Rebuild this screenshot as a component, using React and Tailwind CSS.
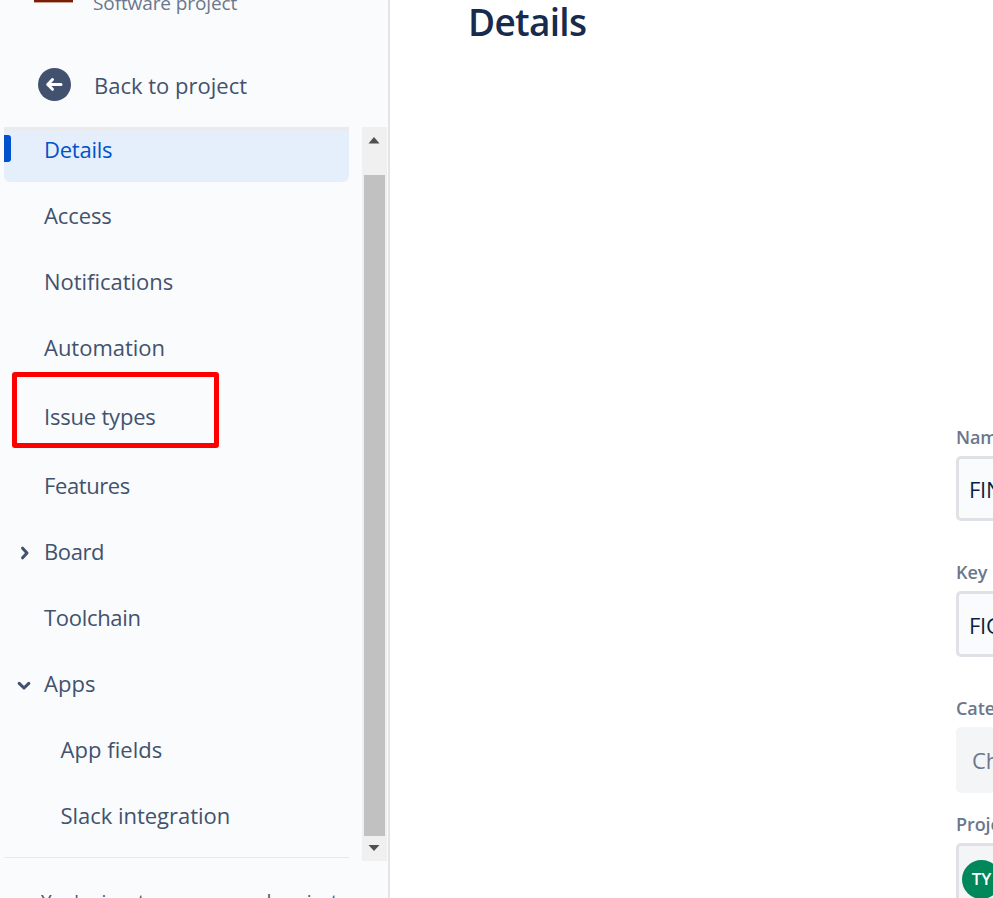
import clsx from "clsx";

const navItems = [
  { label: "Access", tracking: "tracking-[-0.1px]" },
  { label: "Notifications", tracking: "tracking-[-0.02px]" },
  { label: "Automation", tracking: "tracking-[-0.02px]" },
  { label: "Issue types", tracking: "tracking-[-0.2px]", marked: true },
  { label: "Features", tracking: "tracking-[-0.4px]" },
  { label: "Board", tracking: "tracking-[-0.4px]", chevron: "right" },
  { label: "Toolchain", tracking: "tracking-[-0.3px]" },
  { label: "Apps", tracking: "tracking-[0.05px]", chevron: "down" },
  { label: "App fields", tracking: "tracking-[0.05px]", nested: true },
  { label: "Slack integration", tracking: "tracking-[-0.03px]", nested: true },
];

function Chevron({ direction }) {
  return (
    <svg width="16" height="16" viewBox="0 0 16 16" className="ml-3 shrink-0">
      <path
        d={direction === "right" ? "M10.6 4.2 L15 9 L10.6 13.8" : "M7.2 7.4 L12 12 L16.8 7.4"}
        transform="translate(-4 0)"
        fill="none"
        stroke="#42526e"
        strokeWidth="3.1"
        strokeLinecap="round"
        strokeLinejoin="round"
      />
    </svg>
  );
}

function NavItem({ item }) {
  return (
    <div
      className={clsx(
        "relative flex shrink-0 items-center text-[22px] text-[#42526e]",
        item.marked ? "h-[72px]" : "h-[66px]"
      )}
    >
      {item.chevron ? <Chevron direction={item.chevron} /> : <span className="w-7 shrink-0" />}
      <span className={clsx("pb-0.5 whitespace-nowrap", item.nested ? "ml-[28.5px]" : "ml-3", item.tracking)}>
        {item.label}
      </span>
      {item.marked && (
        <div className="absolute top-[-9px] left-2 h-[76px] w-[207px] rounded-[3px] border-5 border-[#ff0000]" />
      )}
    </div>
  );
}

function Scrollbar() {
  return (
    <div className="ml-[13px] flex h-[734px] w-[25px] flex-col items-start bg-[#f0f0f0] pl-0.5">
      <div className="flex h-12 items-start pt-[9px] pl-1">
        <svg width="12" height="8" viewBox="0 0 12 8">
          <path d="M0.5 7.5 L6 1 L11.5 7.5Z" fill="#505050" />
        </svg>
      </div>
      <div className="h-[661px] w-[21px] bg-[#c1c1c1]" />
      <div className="flex grow items-start pt-2 pl-1">
        <svg width="12" height="8" viewBox="0 0 12 8">
          <path d="M0.5 1 L6 7 L11.5 1Z" fill="#505050" />
        </svg>
      </div>
    </div>
  );
}

function Sidebar() {
  return (
    <aside className="flex h-full w-[390px] shrink-0 flex-col overflow-hidden border-r-2 border-[#e4e4e6] bg-[#fafbfd]">
      <div className="flex h-[53px] shrink-0 items-start pl-[34px]">
        <div className="h-[3px] w-[39px] border-b border-[#c9a396] bg-[#7a1f05]" />
        <span className="-mt-3 ml-5 text-[19px] leading-[30px] tracking-[-0.1px] whitespace-nowrap text-[#6b778c]">
          Software project
        </span>
      </div>
      <div className="flex h-[74px] shrink-0 items-start pt-[15px] pl-[38px]">
        <svg width="33" height="33" viewBox="0 0 33 33">
          <circle cx="16.5" cy="16.5" r="16.5" fill="#42526e" />
          <path
            d="M23 16.5 H10.5 M14.5 11.5 L9.7 16.5 L14.5 21.3"
            fill="none"
            stroke="#fff"
            strokeWidth="3"
            strokeLinecap="round"
            strokeLinejoin="round"
          />
        </svg>
        <span className="ml-[23px] text-[22px] leading-[34px] whitespace-nowrap text-[#42526e]">
          Back to project
        </span>
      </div>

      <div className="flex h-[734px] shrink-0">
        <nav className="ml-1 flex h-[731px] w-[345px] flex-col border-b border-[#e7e9ec]">
          <div className="flex h-[55px] shrink-0 items-start rounded-b-md border-t-4 border-[#e9ebee] bg-[#e5effc]">
            <div className="mt-1 h-[27px] w-[7px] rounded-r-[3px] bg-[#0052cc]" />
            <span className="ml-[33px] text-[22px] leading-[36px] tracking-[-0.25px] text-[#0052cc]">
              Details
            </span>
          </div>
          <div className="mt-px flex flex-col">
            {navItems.map((item) => (
              <NavItem key={item.label} item={item} />
            ))}
          </div>
        </nav>
        <Scrollbar />
      </div>

      <p className="mt-[26px] ml-[41px] shrink-0 text-[19px] leading-[28px] tracking-[-0.1px] whitespace-nowrap text-[#42526e]">
        You're in a team-managed project
      </p>
    </aside>
  );
}

function Label({ children }) {
  return (
    <label className="block text-lg leading-6 font-semibold tracking-[-0.1px] whitespace-nowrap text-[#6b778c]">
      {children}
    </label>
  );
}

function TextField({ value, className }) {
  return (
    <div
      className={clsx(
        "mt-[7px] flex w-[500px] items-center rounded-[5px] border-3 border-[#dfe1e6] bg-[#fafbfc] pt-0.5 pl-[10px] text-[22px] tracking-[-0.3px] whitespace-nowrap text-[#091e42]",
        className
      )}
    >
      {value}
    </div>
  );
}

function DetailsForm() {
  return (
    <div className="mt-[377px] ml-[566px] w-[500px]">
      <Label>Name</Label>
      <TextField value="FINAL" className="h-[65px]" />
      <div className="mt-[39px]">
        <Label>Key</Label>
        <TextField value="FIG" className="h-[66px]" />
      </div>
      <div className="mt-[39px]">
        <Label>Category</Label>
        <div className="mt-[7px] flex h-[66px] items-center rounded-[5px] bg-[#f4f5f7] pl-4 text-[22px] text-[#6b778c]">
          Choose a category
        </div>
      </div>
      <div className="mt-[19px]">
        <Label>Project lead</Label>
        <div className="mt-[7px] flex h-[72px] items-center rounded-[5px] border-3 border-[#dfe1e6] bg-[#f4f5f7] pl-[3px]">
          <div className="flex size-[39px] items-center justify-center rounded-full bg-[#00875a] text-[17px] font-semibold text-white">
            TY
          </div>
        </div>
      </div>
    </div>
  );
}

export default function App() {
  return (
    <div className="flex h-[898px] w-[993px] overflow-hidden bg-white font-['Open_Sans','Noto_Sans',sans-serif]">
      <Sidebar />
      <main className="flex-1 overflow-hidden">
        <h1 className="-mt-1 ml-[78px] text-[37px] leading-[52px] font-semibold tracking-[-0.7px] text-[#172b4d]">
          Details
        </h1>
        <DetailsForm />
      </main>
    </div>
  );
}
